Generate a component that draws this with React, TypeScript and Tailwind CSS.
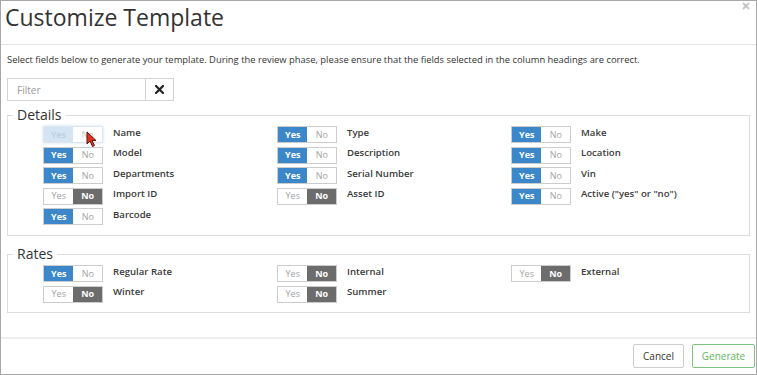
import React from "react";

type Field = { label: string; on: boolean; faded?: boolean };

const details: Field[] = [
  { label: "Name", on: false, faded: true },
  { label: "Type", on: true },
  { label: "Make", on: true },
  { label: "Model", on: true },
  { label: "Description", on: true },
  { label: "Location", on: true },
  { label: "Departments", on: true },
  { label: "Serial Number", on: true },
  { label: "Vin", on: true },
  { label: "Import ID", on: false },
  { label: "Asset ID", on: false },
  { label: 'Active ("yes" or "no")', on: true },
  { label: "Barcode", on: true },
];

const rates: Field[] = [
  { label: "Regular Rate", on: true },
  { label: "Internal", on: false },
  { label: "External", on: false },
  { label: "Winter", on: false },
  { label: "Summer", on: false },
];

function Cursor() {
  return (
    <svg className="absolute left-[42px] top-[4px]" width="12" height="17" viewBox="0 0 12 17">
      <path d="M1 1 L1 13 L4 10 L6.5 15.5 L8.5 14.5 L6 9.5 L10 9.5 Z" fill="#e0301e" stroke="#5a1a10" strokeWidth="1" strokeLinejoin="round" />
    </svg>
  );
}

function Toggle({ on, faded }: { on: boolean; faded?: boolean }) {
  if (faded) {
    // hovered / half-disabled switch under the mouse pointer
    return (
      <div className="relative flex h-[17px] w-[60px] border border-[#dde6ee] text-[9px] shadow-[0_0_3px_#cfe0ef]">
        <div className="flex w-[30px] items-center justify-center bg-[#d5e4f2] font-semibold text-[#b9cde0]">Yes</div>
        <div className="flex w-[30px] items-center justify-center bg-white text-[#c9c9c9]">No</div>
        <Cursor />
      </div>
    );
  }
  return (
    <div className="flex h-[17px] w-[60px] border border-[#cccccc] text-[9px]">
      <div
        className={
          on
            ? "flex w-[30px] items-center justify-center bg-[#3b87c9] font-bold text-white"
            : "flex w-[30px] items-center justify-center bg-white text-[#a3a3a3]"
        }
      >
        Yes
      </div>
      <div
        className={
          on
            ? "flex w-[29px] items-center justify-center bg-white text-[#a3a3a3]"
            : "flex w-[29px] items-center justify-center bg-[#6c6c6c] font-bold text-white"
        }
      >
        No
      </div>
    </div>
  );
}

function Section({ title, fields, className }: { title: string; fields: Field[]; className: string }) {
  return (
    <fieldset className={"border border-[#dddddd] pl-[5px] " + className}>
      <legend className="px-[4px] text-[14px] leading-[18px] text-[#333]">{title}</legend>
      <div className="ml-[30px] mt-[2px] grid grid-cols-[234px_234px_234px] gap-y-[3.5px]">
        {fields.map((f) => (
          <div key={f.label} className="flex items-center gap-[10px]">
            <Toggle on={f.on} faded={f.faded} />
            <span className="-mt-[3px] text-[9.6px] font-semibold text-[#3a3a3a]">{f.label}</span>
          </div>
        ))}
      </div>
    </fieldset>
  );
}

export default function App() {
  return (
    <div
      className="flex h-[375px] w-[757px] flex-col border border-[#a8a8a8] bg-white text-[#333]"
      style={{ fontFamily: '"Open Sans", "Liberation Sans", sans-serif' }}
    >
      {/* Header */}
      <div className="relative h-[44px] shrink-0 border-b border-[#e5e5e5] pl-[4px] pt-[1px]">
        <h1 className="text-[23px] leading-[30px] text-[#333]">Customize Template</h1>
        <button className="absolute right-[6px] top-[1px]" aria-label="Close">
          <svg width="8" height="8" viewBox="0 0 8 8">
            <path d="M1 1 L7 7 M7 1 L1 7" stroke="#c4c4c4" strokeWidth="1.8" />
          </svg>
        </button>
      </div>

      {/* Body */}
      <div className="flex-1 px-[6px] pt-[7px]">
        <p className="text-[9.4px] leading-[16px] text-[#333]">
          Select fields below to generate your template. During the review phase, please ensure that the fields selected in the column headings are correct.
        </p>

        <div className="mt-[10px] flex h-[23px] w-[167px]">
          <input
            placeholder="Filter"
            className="h-full w-[139px] border border-[#d4d4d4] px-[9px] text-[10px] outline-none placeholder:text-[#999]"
          />
          <button className="flex h-full w-[28px] items-center justify-center border border-l-0 border-[#d4d4d4] bg-white">
            <svg width="9" height="9" viewBox="0 0 9 9">
              <path d="M1 1 L8 8 M8 1 L1 8" stroke="#222" strokeWidth="2.2" strokeLinecap="square" />
            </svg>
          </button>
        </div>

        <Section title="Details" fields={details} className="mt-[5px] pb-[10px]" />
        <Section title="Rates" fields={rates} className="mt-[9px] pb-[9px]" />
      </div>

      {/* Footer */}
      <div className="flex h-[37px] shrink-0 items-start justify-end gap-[8px] border-t-2 border-[#eeeeee] pr-[1px] pt-[5px]">
        <button className="h-[24px] w-[51px] rounded-[2px] border border-[#cccccc] bg-white text-[10px] text-[#333]">
          Cancel
        </button>
        <button className="h-[24px] w-[63px] rounded-[2px] border border-[#7cc47c] bg-white text-[10px] text-[#5cb85c]">
          Generate
        </button>
      </div>
    </div>
  );
}
